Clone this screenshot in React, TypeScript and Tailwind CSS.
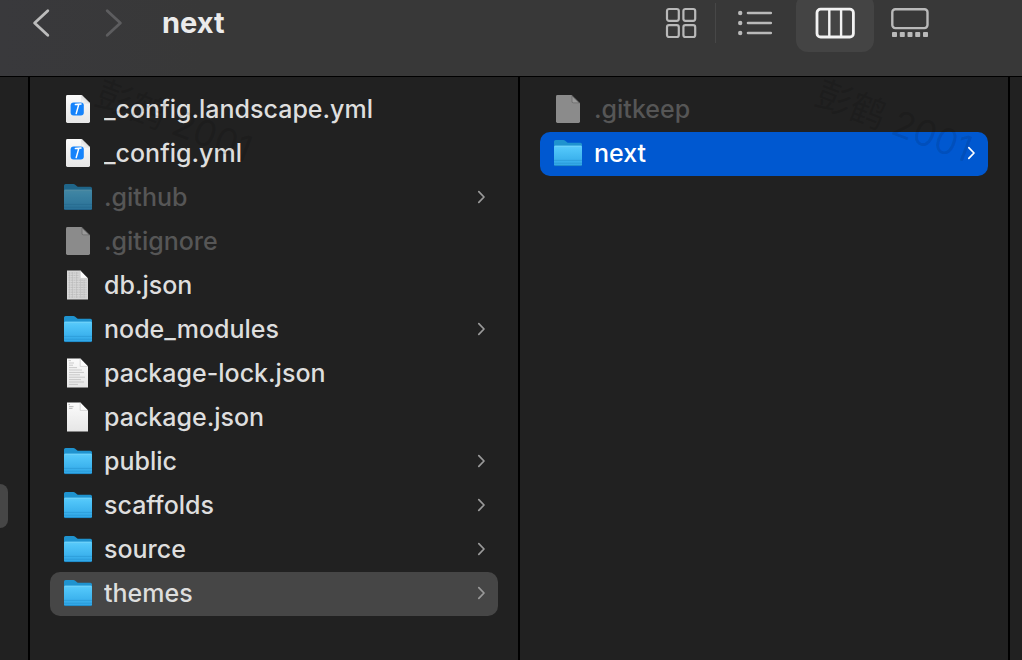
import React from "react";

type Kind = "yaml" | "folder" | "blank" | "data" | "lines" | "json";
type Entry = { name: string; kind: Kind; hidden?: boolean; state?: "path" | "active" };

const project: Entry[] = [
  { name: "_config.landscape.yml", kind: "yaml" },
  { name: "_config.yml", kind: "yaml" },
  { name: ".github", kind: "folder", hidden: true },
  { name: ".gitignore", kind: "blank", hidden: true },
  { name: "db.json", kind: "data" },
  { name: "node_modules", kind: "folder" },
  { name: "package-lock.json", kind: "lines" },
  { name: "package.json", kind: "json" },
  { name: "public", kind: "folder" },
  { name: "scaffolds", kind: "folder" },
  { name: "source", kind: "folder" },
  { name: "themes", kind: "folder", state: "path" },
];

const themes: Entry[] = [
  { name: ".gitkeep", kind: "blank", hidden: true },
  { name: "next", kind: "folder", state: "active" },
];

function Gradients() {
  return (
    <svg aria-hidden="true" className="absolute h-0 w-0">
      <defs>
        <linearGradient id="folderFront" x1="0" y1="0" x2="0" y2="1">
          <stop offset="0" stopColor="#5ccbfa" />
          <stop offset="0.2" stopColor="#4fc4f8" />
          <stop offset="1" stopColor="#2fa6e6" />
        </linearGradient>
        <linearGradient id="paper" x1="0" y1="0" x2="0" y2="1">
          <stop offset="0" stopColor="#fbfbfb" />
          <stop offset="1" stopColor="#e6e6e6" />
        </linearGradient>
        <linearGradient id="fold" x1="0" y1="1" x2="1" y2="0">
          <stop offset="0" stopColor="#ffffff" />
          <stop offset="1" stopColor="#b9b9b9" />
        </linearGradient>
      </defs>
    </svg>
  );
}

function Folder() {
  return (
    <svg viewBox="0 0 28 28" className="size-7" aria-hidden="true">
      <path d="M0 2.6Q0 1 1.6 1H9.4Q10.4 1 11.2 1.7L13 3.2Q13.6 3.7 14.6 3.7H26.4Q28 3.7 28 5.2V12H0Z" fill="#1f93cf" />
      <path d="M0 8Q0 6.8 1.2 6.8H26.8Q28 6.8 28 8V25.6Q28 27 26.6 27H1.4Q0 27 0 25.6Z" fill="url(#folderFront)" />
      <path d="M0.6 7.2H27.4" stroke="#7ddafc" strokeWidth="0.7" />
      <path d="M0 21.4H28M0 24.2H28" stroke="#2793d0" strokeWidth="0.6" />
      <path d="M0.4 26.6H27.6" stroke="#1d83c0" strokeWidth="0.8" />
    </svg>
  );
}

function Yaml() {
  return (
    <svg viewBox="0 0 28 28" className="size-7" aria-hidden="true">
      <path d="M2 1.4Q2 0 3.4 0H17.6L26 8.2V26.6Q26 28 24.6 28H3.4Q2 28 2 26.6Z" fill="url(#paper)" />
      <path d="M17.6 0V6.8Q17.6 8.2 19 8.2H26Z" fill="#cfcfcf" />
      <path d="M17.6 0L26 8.2L19 7.8Q17.8 7.6 17.7 6.4Z" fill="url(#fold)" />
      <rect x="6.6" y="7.4" width="13.2" height="13.2" rx="3" fill="#1583fb" />
      <path d="M11.4 9.6L17 9M14.8 9.4L12.2 18.6" fill="none" stroke="#fff" strokeWidth="1.5" strokeLinecap="round" />
    </svg>
  );
}

function Blank() {
  return (
    <svg viewBox="0 0 28 28" className="size-7" aria-hidden="true">
      <path d="M2 1.4Q2 0 3.4 0H17.6L26 8.2V26.6Q26 28 24.6 28H3.4Q2 28 2 26.6Z" fill="#8b8b8b" />
      <path d="M17.6 0L26 8.2H19.2Q17.6 8.2 17.6 6.6Z" fill="#6a6a6a" />
      <path d="M18.4 1.8L24.4 7.6H19.6Q18.4 7.6 18.4 6.4Z" fill="#9a9a9a" />
    </svg>
  );
}

function Sheet({ kind }: { kind: Kind }) {
  return (
    <svg viewBox="0 0 28 30" className="h-[30px] w-7" aria-hidden="true">
      <path d="M3 0.6H16.2L24 8.4V29.4H3Z" fill={kind === "data" ? "#d6d6d6" : "url(#paper)"} />
      {kind === "data" && (
        <>
          <path d="M4.5 3H15M4.5 5.4H15M4.5 7.8H15M4.5 10.2H22.5M4.5 12.6H22.5M4.5 15H22.5M4.5 17.4H22.5M4.5 19.8H22.5M4.5 22.2H22.5M4.5 24.6H22.5M4.5 27H22.5" stroke="#b0b0b0" strokeWidth="0.6" strokeDasharray="2 0.5" />
          <path d="M5.5 2V28M8.5 2V28M12.5 2V28M16.5 9V28M20 10V28" stroke="#b8b8b8" strokeWidth="0.5" />
        </>
      )}
      {kind === "lines" && (
        <path d="M4.5 2.6H7M5 5H10M5 7.2H9M5 9.6H13M5 12H18M5 14.4H20M5 16.8H16M5 19.2H21M5 21.6H17M5 24H20M5 26.4H14" stroke="#b8b8b8" strokeWidth="0.7" />
      )}
      {kind === "json" && <path d="M4.5 2.6H6M5 4.6H9.5M5 6.4H8.5" stroke="#b4b4b4" strokeWidth="0.9" />}
      <path d="M16.2 0.6V8.4H24Z" fill="#fdfdfd" />
      <path d="M16.2 0.6V8.4H24" fill="none" stroke="#bdbdbd" strokeWidth="0.6" />
    </svg>
  );
}

function FileIcon({ kind }: { kind: Kind }) {
  if (kind === "folder") return <Folder />;
  if (kind === "yaml") return <Yaml />;
  if (kind === "blank") return <Blank />;
  return <Sheet kind={kind} />;
}

function Row({ entry }: { entry: Entry }) {
  const { name, kind, hidden, state } = entry;
  const fill = state === "active" ? "bg-[#0058d0]" : state === "path" ? "bg-[#464646]" : "";
  const ink = state === "active" ? "text-white" : hidden ? "text-[#565656]" : "text-[#dedede]";
  const arrow = state === "active" ? "text-white" : "text-[#9a9a9a]";
  return (
    <li>
      <button type="button" className={`flex h-11 w-full items-center gap-3 rounded-[10px] pr-3 pb-0.5 pl-3.5 text-left ${fill} ${ink}`}>
        <span className={hidden && kind === "folder" ? "opacity-60" : ""}>
          <FileIcon kind={kind} />
        </span>
        <span className="min-w-0 flex-1 truncate text-[25px] leading-8 font-medium">{name}</span>
        {kind === "folder" && (
          <svg viewBox="0 0 10 14" className={`h-3.5 w-2.5 ${arrow}`} aria-hidden="true">
            <path d="M2.8 1.6L8 7L2.8 12.4" fill="none" stroke="currentColor" strokeWidth="1.7" strokeLinecap="round" strokeLinejoin="round" />
          </svg>
        )}
      </button>
    </li>
  );
}

function Column({ label, entries }: { label: string; entries: Entry[] }) {
  return (
    <section aria-label={label} className="min-w-0 flex-1 border-r-2 border-black px-5 pt-[11px]">
      <ul>
        {entries.map((entry) => (
          <Row key={entry.name} entry={entry} />
        ))}
      </ul>
    </section>
  );
}

function Watermark({ place }: { place: string }) {
  return (
    <span
      aria-hidden="true"
      className={`pointer-events-none absolute rotate-[21deg] text-[36px] leading-10 whitespace-nowrap text-black/10 ${place}`}
    >
      彭鹤 2001
    </span>
  );
}

export default function App() {
  return (
    <main className="relative flex min-h-screen flex-col overflow-hidden bg-[#212121] font-[Inter,'Noto_Sans_CJK_SC',sans-serif] text-[#dedede]">
      <Gradients />
      <header className="flex h-[77px] items-start border-b border-black bg-linear-to-r from-[#39393c] to-[#383838] to-20% pr-[76px] pl-[31px]">
        <div className="flex h-[46px] flex-1 items-center">
          <button type="button" aria-label="Back" className="text-[#bcbcbc]">
            <svg viewBox="0 0 20 30" className="h-[30px] w-5" aria-hidden="true">
              <path d="M16.8 2.7L3.6 15L16.8 27.3" fill="none" stroke="currentColor" strokeWidth="2.8" strokeLinecap="round" strokeLinejoin="round" />
            </svg>
          </button>
          <button type="button" aria-label="Forward" className="ml-[53px] text-[#5d5d5f]">
            <svg viewBox="0 0 20 30" className="h-[30px] w-5" aria-hidden="true">
              <path d="M3.2 2.7L16.4 15L3.2 27.3" fill="none" stroke="currentColor" strokeWidth="2.8" strokeLinecap="round" strokeLinejoin="round" />
            </svg>
          </button>
          <h1 className="ml-[38px] text-[29px] leading-9 font-bold text-[#ebebeb]">next</h1>
        </div>
        <nav aria-label="View" className="-mt-1.5 flex h-[58px] items-center text-[#b9b9b9]">
          <button type="button" aria-label="Icons" className="flex h-full w-[68px] items-center justify-center">
            <svg viewBox="0 0 32 32" className="size-8" fill="none" stroke="currentColor" strokeWidth="2.2" aria-hidden="true">
              <rect x="2" y="2" width="11.8" height="11.8" rx="2" />
              <rect x="18.4" y="2" width="11.8" height="11.8" rx="2" />
              <rect x="2" y="18.2" width="11.8" height="11.8" rx="2" />
              <rect x="18.4" y="18.2" width="11.8" height="11.8" rx="2" />
            </svg>
          </button>
          <span className="h-10 w-px bg-[#474747]" />
          <button type="button" aria-label="List" className="flex h-full w-20 items-center justify-center pr-0.5">
            <svg viewBox="0 0 36 28" className="h-7 w-9" aria-hidden="true">
              <path d="M11 4H33.8M11 14H33.8M11 24H33.8" stroke="currentColor" strokeWidth="2.6" strokeLinecap="round" />
              <g fill="currentColor">
                <circle cx="3.2" cy="4" r="2.2" />
                <circle cx="3.2" cy="14" r="2.2" />
                <circle cx="3.2" cy="24" r="2.2" />
              </g>
            </svg>
          </button>
          <button type="button" aria-label="Columns" aria-pressed="true" className="flex h-full w-[78px] items-center justify-center rounded-xl bg-[#444444] text-[#f2f2f2]">
            <svg viewBox="0 0 40 32" className="h-8 w-10" fill="none" stroke="currentColor" aria-hidden="true">
              <rect x="2" y="2.2" width="36.4" height="27.8" rx="3.6" strokeWidth="2.8" />
              <path d="M14.3 2.4V30M26.1 2.4V30" strokeWidth="2.4" />
            </svg>
          </button>
          <button type="button" aria-label="Gallery" className="flex h-full w-[72px] items-center justify-center">
            <svg viewBox="0 0 40 32" className="h-8 w-10" aria-hidden="true">
              <rect x="2.3" y="2.3" width="35.2" height="18.8" rx="3" fill="none" stroke="currentColor" strokeWidth="2.4" />
              <g fill="currentColor">
                <rect x="2" y="25" width="5" height="5" rx="0.8" />
                <rect x="9.8" y="25" width="5" height="5" rx="0.8" />
                <rect x="17.5" y="25" width="5" height="5" rx="0.8" />
                <rect x="25.2" y="25" width="5" height="5" rx="0.8" />
                <rect x="33" y="25" width="5" height="5" rx="0.8" />
              </g>
            </svg>
          </button>
        </nav>
      </header>
      <div className="relative flex flex-1">
        <aside className="w-[30px] shrink-0 border-r-2 border-black pt-[407px]">
          <div className="h-11 w-2 rounded-r-[10px] bg-[#464646]" />
        </aside>
        <Column label="Project" entries={project} />
        <Column label="themes" entries={themes} />
        <div className="w-3 shrink-0" />
        <Watermark place="top-6 left-[92px]" />
        <Watermark place="top-6 right-[46px]" />
      </div>
    </main>
  );
}
